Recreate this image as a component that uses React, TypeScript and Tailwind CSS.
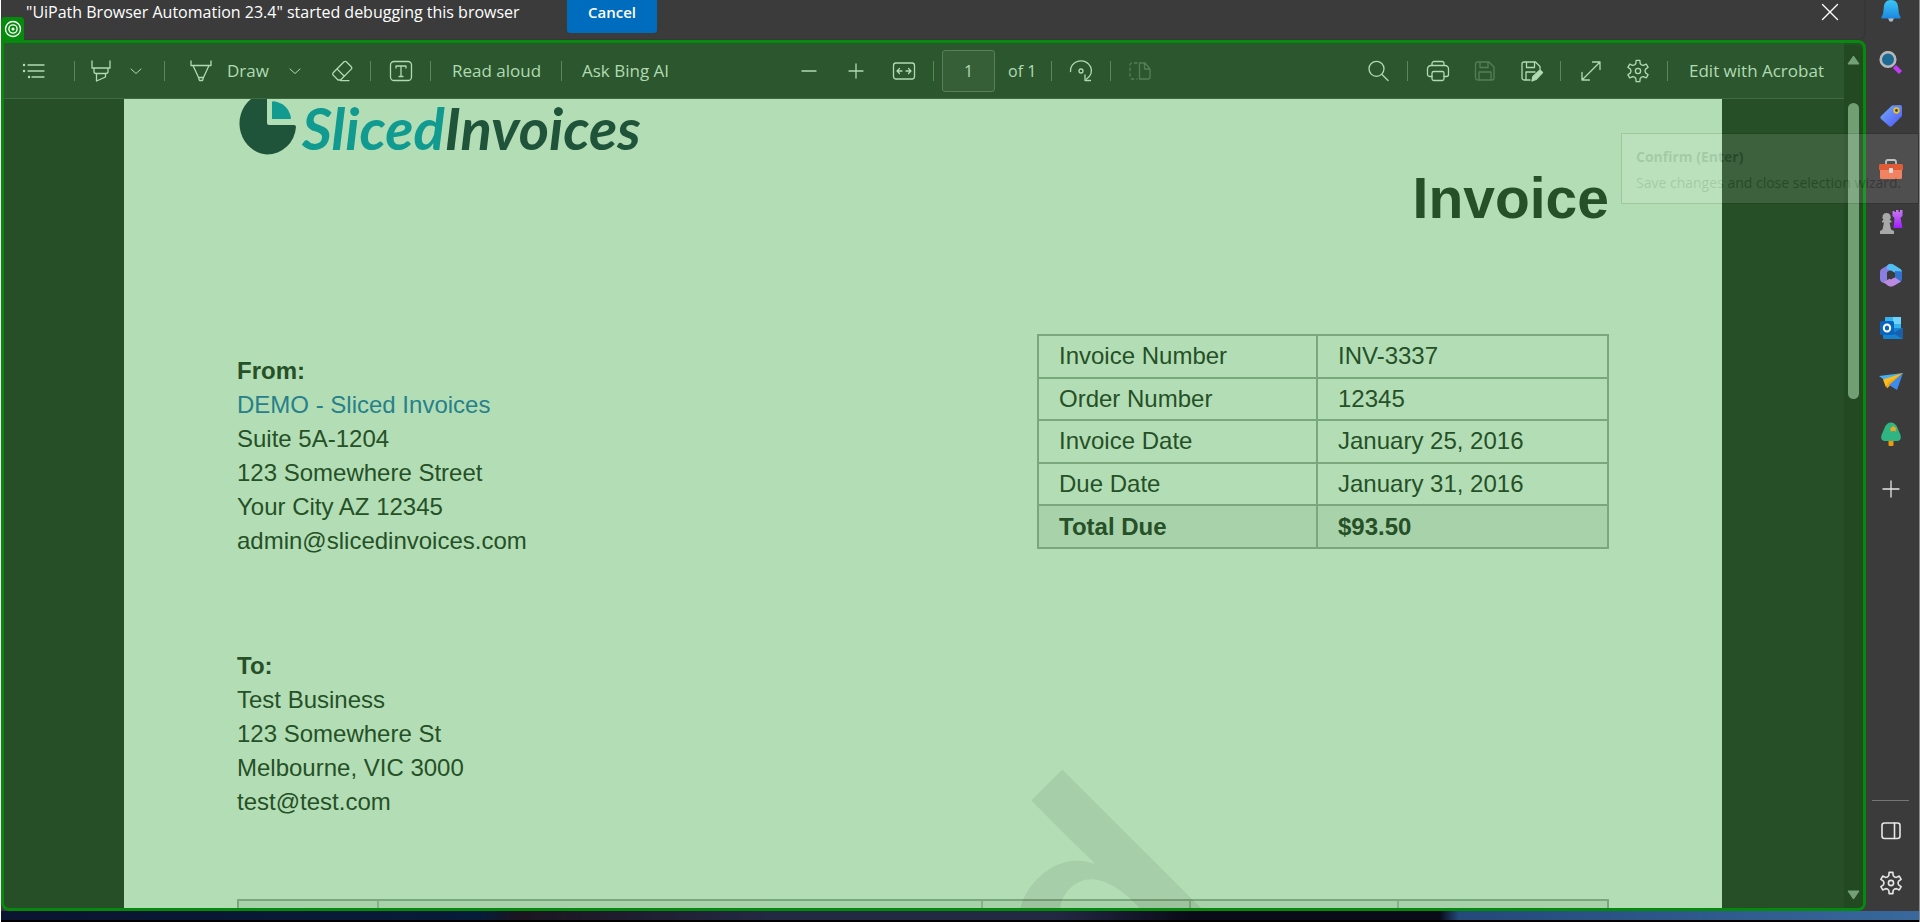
import React from "react";

const GEAR = (() => {
  const pts: string[] = [];
  for (let i = 0; i < 6; i++) {
    const base = -90 + i * 60;
    const ring: [number, number][] = [
      [-10, 10.8],
      [10, 10.8],
      [16, 7.8],
      [30, 7],
      [44, 7.8],
    ];
    ring.forEach(([a, r]) => {
      const t = ((base + a) * Math.PI) / 180;
      pts.push(`${(12 + r * Math.cos(t)).toFixed(2)} ${(12 + r * Math.sin(t)).toFixed(2)}`);
    });
  }
  return `M${pts.join("L")}Z`;
})();

function Glyph({ children, size = 24, width = 1.3 }: { children: React.ReactNode; size?: number; width?: number }) {
  return (
    <svg width={size} height={size} viewBox="0 0 24 24" fill="none" stroke="currentColor" strokeWidth={width} strokeLinecap="round" strokeLinejoin="round" aria-hidden="true" className="shrink-0">
      {children}
    </svg>
  );
}

function Tool({ label, className, children, disabled }: { label: string; className: string; children: React.ReactNode; disabled?: boolean }) {
  return (
    <button type="button" aria-label={label} disabled={disabled} className={"flex h-10 w-6 shrink-0 items-center justify-center disabled:opacity-30 " + className}>
      {children}
    </button>
  );
}

const Sep = ({ className }: { className: string }) => <div className={"h-5 w-px shrink-0 bg-[#5b875d] " + className} />;

const Chevron = () => (
  <Glyph size={12} width={2}>
    <path d="M2 8l10 9 10-9" />
  </Glyph>
);

const Gear = () => (
  <>
    <path d={GEAR} />
    <circle cx="12" cy="12" r="2.6" />
  </>
);

function Toolbar() {
  return (
    <div className="flex h-14 shrink-0 items-center border-b border-[#3f6b40] bg-[#2c562e] text-[17px] whitespace-nowrap text-[#b0dbb2]">
      <Tool label="Contents" className="ml-[18px]">
        <Glyph>
          <path d="M6 6h16M6 12h16M10 18h12" />
          <path d="M2 6h.1M2 12h.1M7 18h.1" strokeWidth="2.4" />
        </Glyph>
      </Tool>
      <Sep className="ml-7" />
      <Tool label="Highlight" className="ml-[14px]">
        <Glyph>
          <path d="M3 2v7h18V2M5 9v3.500a2 2 0 0 0 2 2h10a2 2 0 0 0 2-2V9M7.500 14.500V22l9-4v-3.500" />
        </Glyph>
      </Tool>
      <Tool label="Highlight options" className="ml-[11px]">
        <Chevron />
      </Tool>
      <Sep className="ml-4" />
      <button type="button" className="ml-6 flex h-10 w-[82px] shrink-0 items-center gap-[14px]">
        <Glyph>
          <path d="M2 2v4.500h20V2M4 6.500l6 13M20 6.500l-6 13M9.500 18.500h5l-1 3h-3z" />
        </Glyph>
        <span>Draw</span>
      </button>
      <Tool label="Draw options" className="ml-3">
        <Chevron />
      </Tool>
      <Tool label="Erase" className="ml-[23px]">
        <Glyph>
          <path d="M3.200 13.800L14 2.800a1.600 1.600 0 0 1 2.300 0l5 5a1.600 1.600 0 0 1 0 2.300L10.500 21H8l-4.800-4.900a1.600 1.600 0 0 1 0-2.300zM7 9.900l7.300 7.300M10.500 21.600H19" />
        </Glyph>
      </Tool>
      <Sep className="ml-4" />
      <Tool label="Add text" className="ml-[18px]">
        <Glyph>
          <rect x="1.500" y="2.500" width="21" height="19" rx="3.500" />
          <path d="M7 9V7h10v2M12 7v10.500M10 17.500h4" />
        </Glyph>
      </Tool>
      <Sep className="ml-[17px]" />
      <button type="button" className="ml-[21px] h-10 w-[89px] shrink-0 text-left">Read aloud</button>
      <Sep className="ml-5" />
      <button type="button" className="ml-5 h-10 w-[92px] shrink-0 text-left">Ask Bing AI</button>

      <Tool label="Zoom out" className="ml-[123px]">
        <Glyph>
          <path d="M5 12h14" />
        </Glyph>
      </Tool>
      <Tool label="Zoom in" className="ml-[23px]">
        <Glyph>
          <path d="M5 12h14M12 5v14" />
        </Glyph>
      </Tool>
      <Tool label="Fit to width" className="ml-6">
        <Glyph>
          <rect x="1.500" y="4" width="21" height="16" rx="2.500" />
          <path d="M5 12h5M7.500 9.500L5 12l2.500 2.500M19 12h-5M16.500 9.500L19 12l-2.500 2.500" />
        </Glyph>
      </Tool>
      <Sep className="ml-[17px]" />
      <input aria-label="Page number" defaultValue="1" className="ml-2 h-[42px] w-[53px] shrink-0 rounded-[3px] border border-[#587f59] bg-[#365f38] text-center text-[16px] outline-none" />
      <span className="ml-[13px] w-[28px] text-[16px]">of 1</span>
      <Sep className="ml-[15px]" />
      <Tool label="Rotate" className="ml-[17px]">
        <Glyph>
          <path d="M1.500 12.500A10.500 9.800 0 1 1 17.500 20M16 16v5.500h5.500" />
          <circle cx="12" cy="12" r="2" />
        </Glyph>
      </Tool>
      <Sep className="ml-[17px]" />
      <Tool label="Page view" className="ml-[17px]" disabled>
        <Glyph>
          <path d="M11.500 4v16H20a2 2 0 0 0 2-2v-8l-5-6zM16.500 4v6H22" />
          <path d="M9 4H4a2 2 0 0 0-2 2v12a2 2 0 0 0 2 2h5" strokeDasharray="2.500 3" />
        </Glyph>
      </Tool>

      <div className="ml-auto flex items-center">
        <Tool label="Find" className="">
          <Glyph>
            <circle cx="10.500" cy="9.800" r="7.500" />
            <path d="M16 15.500l6 6" />
          </Glyph>
        </Tool>
        <Sep className="ml-[17px]" />
        <Tool label="Print" className="ml-[18px]">
          <Glyph>
            <path d="M6 6.500V4.500a2 2 0 0 1 2-2h8a2 2 0 0 1 2 2v2M6 17.500H3.500a2 2 0 0 1-2-2V10A3.500 3.500 0 0 1 5 6.500h14a3.500 3.500 0 0 1 3.500 3.500v5.500a2 2 0 0 1-2 2H18" />
            <rect x="6" y="12.500" width="12" height="9" rx="1.800" />
          </Glyph>
        </Tool>
        <Tool label="Save" className="ml-[23px]" disabled>
          <Glyph>
            <path d="M4.500 3H16l5 5v11a2 2 0 0 1-2 2H4.500a2 2 0 0 1-2-2V5a2 2 0 0 1 2-2zM7 3v5.500h8V3M6 21v-8h12v8" />
          </Glyph>
        </Tool>
        <Tool label="Save as" className="ml-[23px]">
          <Glyph>
            <path d="M10 21H4a2 2 0 0 1-2-2V5a2 2 0 0 1 2-2h11.500L20 7.500V10M6.500 3v5.500h8V3M6 21v-8h9" />
            <path d="M12 22l1-4.500L20 11l2.500 2.500-6.500 7z" fill="currentColor" />
          </Glyph>
        </Tool>
        <Sep className="ml-4" />
        <Tool label="Full screen" className="ml-[18px]">
          <Glyph>
            <path d="M3 21L21 3M13.500 3H21v7.500M3 13.500V21h7.500" />
          </Glyph>
        </Tool>
        <Tool label="Settings" className="ml-[23px]">
          <Glyph>
            <Gear />
          </Glyph>
        </Tool>
        <Sep className="ml-[17px]" />
        <button type="button" className="ml-[21px] mr-4 h-10 w-[139px] shrink-0 text-left">Edit with Acrobat</button>
      </div>
    </div>
  );
}

function Logo() {
  return (
    <div className="flex h-[55px] gap-1" aria-label="Sliced Invoices" role="img">
      <svg width="61" height="56" viewBox="0 0 61 56" className="shrink-0" aria-hidden="true">
        <path d="M30 0v24q0 2 2 2h25q2 0 2 2A29 29.500 0 0 1 30 55.500 29.500 31 0 0 1 14 0z" fill="#20543a" />
        <path d="M35 20V3.500q0-1.500 1.800-1.300Q51 4.500 54 18.500 54 20 53 20z" fill="#109a90" />
      </svg>
      <span className="font-['Lato',sans-serif] text-[58px] leading-[58px] font-bold whitespace-nowrap italic">
        <span className="text-[#109a90]">Sliced</span>
        <span className="text-[#20543a]">Invoices</span>
      </span>
    </div>
  );
}

const details = [
  ["Invoice Number", "INV-3337"],
  ["Order Number", "12345"],
  ["Invoice Date", "January 25, 2016"],
  ["Due Date", "January 31, 2016"],
  ["Total Due", "$93.50"],
];

function InvoicePage() {
  return (
    <article className="relative ml-[120px] mr-[122px] flex-1 bg-[#b3deb5] px-[113px] font-['Liberation_Sans',Arial,sans-serif] text-2xl leading-[34px] text-[#265027]">
      <Logo />
      <h1 className="mt-4 text-right text-[57px] leading-[57px] font-bold">Invoice</h1>
      <div className="mt-[107px] flex items-start justify-between">
        <div className="pt-5">
          <address className="not-italic">
            <b>From:</b>
            <br />
            <a href="#demo" className="text-[#27808a]">DEMO - Sliced Invoices</a>
            <br />
            Suite 5A-1204
            <br />
            123 Somewhere Street
            <br />
            Your City AZ 12345
            <br />
            admin@slicedinvoices.com
          </address>
          <address className="mt-[91px] not-italic">
            <b>To:</b>
            <br />
            Test Business
            <br />
            123 Somewhere St
            <br />
            Melbourne, VIC 3000
            <br />
            test@test.com
          </address>
        </div>
        <table className="h-[215px] w-[572px] table-fixed border-collapse">
          <tbody>
            {details.map(([name, value], i) => (
              <tr key={name} className={i === 4 ? "bg-[#a8d2aa] font-bold" : ""}>
                <th scope="row" className="w-[279px] border-2 border-[#7ba77d] px-5 py-0 text-left [font-weight:inherit]">
                  {name}
                </th>
                <td className="border-2 border-[#7ba77d] px-5 py-0">{value}</td>
              </tr>
            ))}
          </tbody>
        </table>
      </div>
      <div className="mt-20 grid h-16 grid-cols-[140px_1fr_208px_208px_208px] divide-x-2 divide-[#86b288] border-2 border-[#7ba77d] bg-[#a8d2aa]">
        <div />
        <div />
        <div />
        <div />
        <div />
      </div>
      <div aria-hidden="true" className="absolute top-[627px] right-[672px] origin-top-right -rotate-45 text-[320px] leading-none font-bold text-black/7">
        d
      </div>
    </article>
  );
}

const sideIcons: { name: string; art: React.ReactNode }[] = [
  {
    name: "Notifications",
    art: (
      <>
        <path d="M9 20h6l-1.500 3.500h-3z" fill="#b8bcc0" />
        <path d="M12 2C7 2 5 5.500 4.800 9.500L4 16l-1.500 3q-.5 1.500 1 1.500h17q1.500 0 1-1.500L20 16l-.8-6.500C19 5.500 17 2 12 2z" fill="url(#bell)" />
      </>
    ),
  },
  {
    name: "Search",
    art: (
      <>
        <path d="M15.500 15.500l6 6" stroke="#c13bf5" strokeWidth="4.500" />
        <circle cx="9" cy="8.500" r="7.300" fill="#1e6a93" stroke="#b5b8bb" strokeWidth="2.600" />
      </>
    ),
  },
  {
    name: "Shopping",
    art: (
      <>
        <path d="M13 1.500L21 1q2 0 2 2v9L13 22q-1.500 1.500-3 0l-8-7q-1.500-1.500 0-3z" fill="url(#tag)" />
        <circle cx="17.500" cy="6.500" r="2.300" fill="#35426a" stroke="#f3c318" strokeWidth="1.700" />
      </>
    ),
  },
  {
    name: "Tools",
    art: (
      <>
        <path d="M7 8V5q0-2 2-2h6q2 0 2 2v3" fill="none" stroke="#b9bbbd" strokeWidth="1.800" />
        <rect x="1" y="10" width="22" height="12" rx="1.500" fill="#f07550" />
        <path d="M1 7h22q1 0 1 2v4H0V9q0-2 1-2z" fill="#d9481f" />
        <rect x="10" y="11" width="4" height="5" rx="1" fill="#d6d8da" />
      </>
    ),
  },
  {
    name: "Games",
    art: (
      <>
        <path d="M13.500 1v5l2 2-1 10h9l-2-10 2-2V0h-2.500v2h-1.500V0H17v2h-1.500V1z" fill="url(#rook)" />
        <path d="M7.500 3a4 4 0 0 0-3 6.700L3 11v1.500h2L3.500 19.500 1 21v3h14v-3l-3-1.500-1.500-7h2V11L10.700 9.700A4 4 0 0 0 7.500 3z" fill="#a8a8a8" />
      </>
    ),
  },
  {
    name: "Microsoft 365",
    art: (
      <>
        <path d="M11 1L2.500 6Q1 7 1 9v7q0 2 1.500 3l2 1L8 17V9l5-3z" fill="#8a7fe0" />
        <path d="M9.500 1.200q2.500-1 4.500 0L21.500 6Q23 7 23 9v5l-7-4-8-4V3z" fill="#52bdf2" />
        <path d="M23 8.500V16q0 2-1.500 3L16 22l-4-5 4-2.500V8z" fill="#3273cf" />
        <path d="M4 19l8-4 4-.500 6 4-7.500 4.500q-2.500 1.200-5 0z" fill="#b98ae0" />
        <path d="M8.500 9.500L12 7.500l4 2.500v4l-4 2.500-3.500-2z" fill="#3b3b3b" />
      </>
    ),
  },
  {
    name: "Outlook",
    art: (
      <>
        <rect x="6" y="1" width="16" height="14" rx="1" fill="#34b5f2" />
        <path d="M14 1h8v7h-8z" fill="#6ed4fb" />
        <path d="M4 12h19.500v11H5q-1 0-1-1z" fill="#1583cf" />
        <path d="M23.500 12v11L14 17z" fill="#1a5fae" />
        <rect x="1" y="5" width="14" height="14" rx="1.500" fill="#0a63bd" />
        <ellipse cx="8" cy="12" rx="3.200" ry="3.600" fill="none" stroke="#fff" strokeWidth="2" />
      </>
    ),
  },
  {
    name: "Drop",
    art: (
      <>
        <path d="M0 7L24 4 8 13z" fill="#45b0f6" />
        <path d="M24 4L6 12.500l2 7z" fill="#f5a80c" />
        <path d="M24 4l-6 17-8-5z" fill="#3d8bef" />
        <path d="M24 4L4 10.500l3 8 2-5z" fill="#f9bd20" />
      </>
    ),
  },
  {
    name: "Tree",
    art: (
      <>
        <rect x="9.500" y="17" width="5" height="7" rx="1" fill="#ee9a0c" />
        <path d="M12 0.500q4.500 0 6.500 5.500l3 7q1.500 6-4 6h-11q-5.500 0-4-6l3-7Q7.500.500 12 .500z" fill="#2fb583" />
        <path d="M14 3.500l1.500 1.800 2.200.7-1.200 1.500.5 2-3-.7-2.500 1 .5-2.300L11 6l2-.500z" fill="#f6a51c" />
      </>
    ),
  },
];

function Sidebar() {
  return (
    <aside className="flex w-[53px] shrink-0 flex-col items-center bg-[#3b3b3b] pr-1 text-[#e6e6e6]">
      <svg width="0" height="0" className="absolute" aria-hidden="true">
        <defs>
          <linearGradient id="bell" x1="0" y1="0" x2="0" y2="1">
            <stop offset="0" stopColor="#3cc8f5" />
            <stop offset="1" stopColor="#1c86e0" />
          </linearGradient>
          <linearGradient id="tag" x1="0" y1="0" x2="1" y2="1">
            <stop offset="0" stopColor="#6fb0fa" />
            <stop offset="1" stopColor="#5353f5" />
          </linearGradient>
          <linearGradient id="rook" x1="0" y1="0" x2="0" y2="1">
            <stop offset="0" stopColor="#c77bf0" />
            <stop offset="1" stopColor="#a11cff" />
          </linearGradient>
        </defs>
      </svg>
      <nav aria-label="Sidebar apps" className="-mt-0.5 flex flex-col items-center gap-[29px]">
        {sideIcons.map((icon) => (
          <button key={icon.name} type="button" aria-label={icon.name} className="size-6">
            <svg width="24" height="24" viewBox="0 0 24 24" aria-hidden="true">
              {icon.art}
            </svg>
          </button>
        ))}
        <button type="button" aria-label="Add app" className="size-6">
          <Glyph>
            <path d="M4 14h16M12 6v16" />
          </Glyph>
        </button>
      </nav>
      <div className="mt-auto flex flex-col items-center">
        <div className="h-px w-[37px] bg-[#757575]" />
        <button type="button" aria-label="Toggle panel" className="mt-[18px] size-6">
          <Glyph width={1.6}>
            <rect x="3" y="4" width="18" height="15.500" rx="2.500" />
            <path d="M15.500 4v15.500" />
          </Glyph>
        </button>
        <button type="button" aria-label="Browser settings" className="mt-7 mb-4 size-6">
          <Glyph width={1.6}>
            <Gear />
          </Glyph>
        </button>
      </div>
    </aside>
  );
}

export default function App() {
  return (
    <div className="relative flex h-screen flex-col overflow-hidden border-r border-l border-r-[#8a8a8a] border-l-white bg-[#3b3b3b] font-['Open_Sans','Noto_Sans',sans-serif]">
      <div className="flex min-h-0 flex-1">
        <main className="relative flex min-w-0 flex-1 flex-col">
          <header className="flex h-10 shrink-0 items-start justify-between rounded-br-lg border-r-2 border-b border-[#363636] pr-6 pl-[25px] text-white">
            <div className="flex items-start">
              <p className="w-[541px] text-[16px] leading-6 whitespace-nowrap">"UiPath Browser Automation 23.4" started debugging this browser</p>
              <button type="button" className="h-[33px] w-[90px] rounded-b-[3px] bg-[#006cbe] pb-[9px] text-[15px] leading-6 font-semibold">
                Cancel
              </button>
            </div>
            <button type="button" aria-label="Close" className="flex h-6 w-5 items-center justify-center">
              <Glyph size={20} width={1.6}>
                <path d="M3 3l18 18M21 3L3 21" />
              </Glyph>
            </button>
          </header>
          <div className="absolute top-[17px] left-0 flex h-6 w-[23px] items-center justify-center rounded-t-[4px] bg-[#068a0d] text-white">
            <Glyph size={18} width={1.8}>
              <circle cx="12" cy="12" r="10" />
              <circle cx="12" cy="12" r="5.500" />
              <circle cx="12" cy="12" r="1.200" fill="currentColor" />
            </Glyph>
          </div>
          <section className="flex min-h-0 flex-1 overflow-hidden rounded-r-lg rounded-bl-lg border-3 border-[#068a0d] bg-[#274f27]">
            <div className="flex min-w-0 flex-1 flex-col">
              <Toolbar />
              <div className="flex min-h-0 flex-1">
                <InvoicePage />
              </div>
            </div>
            <div className="mt-0.5 flex w-[19px] shrink-0 flex-col items-center rounded-tr-lg bg-[#234923] pt-2.5 pb-2">
              <svg width="13" height="10" viewBox="0 0 13 10" aria-hidden="true">
                <path d="M6.500 1L12 9H1z" fill="#74a076" stroke="#74a076" strokeLinejoin="round" />
              </svg>
              <div className="mt-[38px] h-[296px] w-[11px] rounded-full bg-[#729e74]" />
              <svg width="13" height="10" viewBox="0 0 13 10" className="mt-auto" aria-hidden="true">
                <path d="M6.500 9L12 1H1z" fill="#74a076" stroke="#74a076" strokeLinejoin="round" />
              </svg>
            </div>
          </section>
        </main>
        <Sidebar />
      </div>
      <div className="h-[11px] shrink-0 border-b-2 border-black bg-linear-[90deg,#0b1430_0%,#071c3a_25%,#1c1420_27%,#232843_40%,#232843_55%,#0a0a18_62%,#0a0a18_75%,#24497b_76%,#38689c_100%]" />
      <div role="tooltip" className="absolute top-[133px] right-0 h-[71px] w-[298px] border border-black bg-white py-[10px] pl-[14px] text-[14px] leading-[26px] whitespace-nowrap text-[#222] opacity-10">
        <b className="block">Confirm (Enter)</b>
        Save changes and close selection wizard.
      </div>
    </div>
  );
}
